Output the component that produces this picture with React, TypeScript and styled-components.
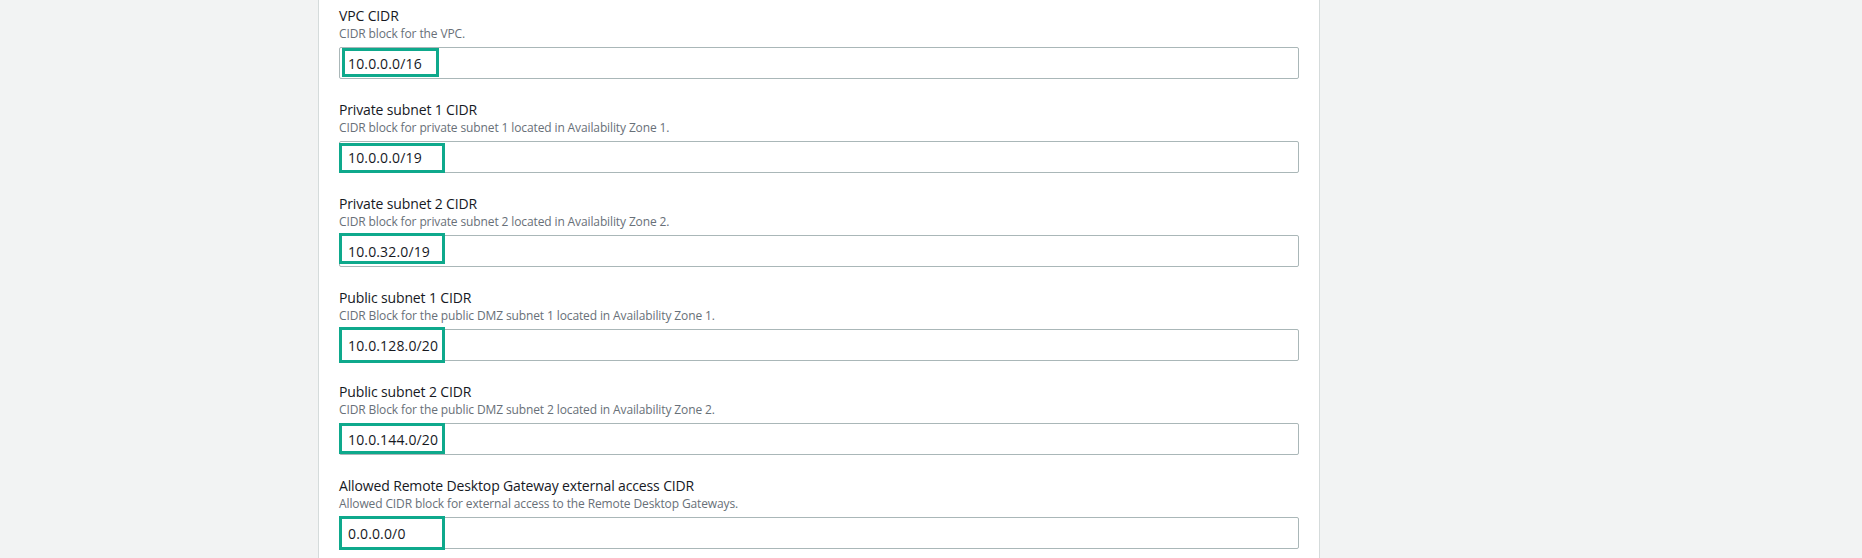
import React from "react";
import styled, { createGlobalStyle } from "styled-components";

const GlobalStyle = createGlobalStyle`
  html, body {
    margin: 0;
    padding: 0;
    background: #f2f3f3;
    font-family: "Open Sans", "Noto Sans", Arial, sans-serif;
    overflow: hidden;
  }
  * { box-sizing: border-box; }
`;

const Page = styled.div`
  display: grid;
  grid-template-columns: 318px 1002px 1fr;
  min-height: 100vh;
`;

const Panel = styled.section`
  grid-column: 2;
  background: #ffffff;
  border-left: 1px solid #d5dbdb;
  border-right: 1px solid #d5dbdb;
  padding: 0 20px;
  display: flex;
  flex-direction: column;
`;

const Field = styled.div`
  display: flex;
  flex-direction: column;
  padding: 5px 0 15px;
`;

const Label = styled.label`
  font-size: 14px;
  line-height: 21px;
  letter-spacing: -0.14px;
  color: #16191f;
`;

const Description = styled.div`
  font-size: 12px;
  line-height: 16px;
  letter-spacing: -0.12px;
  color: #687078;
`;

const InputWrap = styled.div`
  position: relative;
  margin-top: 5px;
`;

const TextInput = styled.input`
  display: block;
  width: 100%;
  height: 32px;
  padding: 0 8px;
  border: 1px solid #aab7b8;
  border-radius: 2px;
  background: #ffffff;
  font-family: "Open Sans", "Noto Sans", Arial, sans-serif;
  font-size: 14px;
  letter-spacing: 0.15px;
  color: #16191f;
  outline: none;
`;

const Highlight = styled.div<{ $x: number; $y: number; $w: number; $h: number }>`
  position: absolute;
  left: ${(p) => p.$x}px;
  top: ${(p) => p.$y}px;
  width: ${(p) => p.$w}px;
  height: ${(p) => p.$h}px;
  border: 3px solid #0ea98c;
  pointer-events: none;
`;

type Item = {
  label: string;
  desc: string;
  value: string;
  box: { x: number; y: number; w: number; h: number };
};

const items: Item[] = [
  {
    label: "VPC CIDR",
    desc: "CIDR block for the VPC.",
    value: "10.0.0.0/16",
    box: { x: 3, y: 1, w: 97, h: 29 },
  },
  {
    label: "Private subnet 1 CIDR",
    desc: "CIDR block for private subnet 1 located in Availability Zone 1.",
    value: "10.0.0.0/19",
    box: { x: 0, y: 2, w: 106, h: 30 },
  },
  {
    label: "Private subnet 2 CIDR",
    desc: "CIDR block for private subnet 2 located in Availability Zone 2.",
    value: "10.0.32.0/19",
    box: { x: 0, y: -2, w: 106, h: 31 },
  },
  {
    label: "Public subnet 1 CIDR",
    desc: "CIDR Block for the public DMZ subnet 1 located in Availability Zone 1.",
    value: "10.0.128.0/20",
    box: { x: 0, y: -2, w: 106, h: 36 },
  },
  {
    label: "Public subnet 2 CIDR",
    desc: "CIDR Block for the public DMZ subnet 2 located in Availability Zone 2.",
    value: "10.0.144.0/20",
    box: { x: 0, y: 0, w: 106, h: 31 },
  },
  {
    label: "Allowed Remote Desktop Gateway external access CIDR",
    desc: "Allowed CIDR block for external access to the Remote Desktop Gateways.",
    value: "0.0.0.0/0",
    box: { x: 0, y: -1, w: 106, h: 34 },
  },
];

export default function App() {
  return (
    <>
      <GlobalStyle />
      <Page>
        <Panel>
          {items.map((it, i) => (
            <Field key={i}>
              <Label htmlFor={`f${i}`}>{it.label}</Label>
              <Description>{it.desc}</Description>
              <InputWrap>
                <TextInput id={`f${i}`} readOnly defaultValue={it.value} />
                <Highlight $x={it.box.x} $y={it.box.y} $w={it.box.w} $h={it.box.h} />
              </InputWrap>
            </Field>
          ))}
        </Panel>
      </Page>
    </>
  );
}
